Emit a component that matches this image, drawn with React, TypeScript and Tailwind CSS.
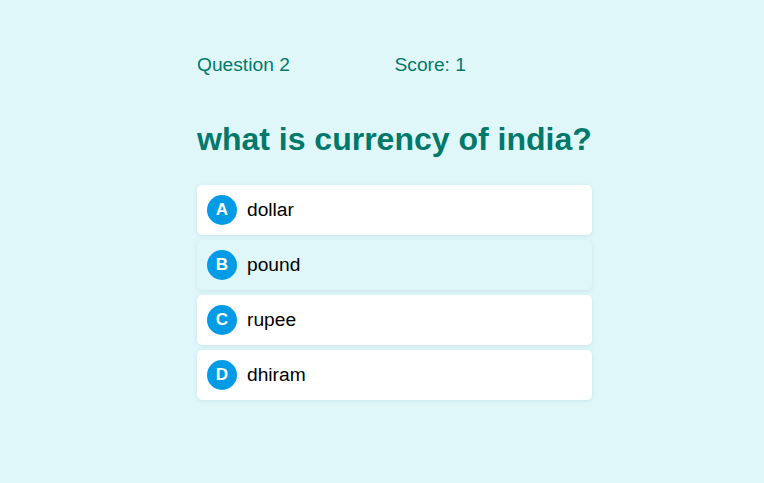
import React from "react";

const options = [
  { l: "A", t: "dollar" },
  { l: "B", t: "pound", hover: true },
  { l: "C", t: "rupee" },
  { l: "D", t: "dhiram" },
];

export default function App() {
  return (
    <div className="min-h-[483px] w-full bg-[#e0f7fa] font-['Liberation_Sans',Arial,sans-serif]">
      <div className="ml-[197px] w-[395px] pt-[53px]">
        <div className="grid grid-cols-2 text-[19.2px] leading-[23px] text-[#00796b]">
          <div>Question 2</div>
          <div>Score: 1</div>
        </div>
        <h1 className="mt-[45px] text-[32px] font-bold leading-[37px] text-[#00796b] whitespace-nowrap">
          what is currency of india?
        </h1>
        <div className="mt-[27px] flex flex-col gap-[5px]">
          {options.map((o) => (
            <div
              key={o.l}
              className={`flex h-[50px] items-center gap-[10px] rounded-[5px] px-[10px] shadow-[0_1px_4px_rgba(0,96,100,0.12)] ${
                o.hover ? "bg-[#e0f7fa]" : "bg-white"
              }`}
            >
              <div className="flex h-[30px] w-[30px] items-center justify-center rounded-full bg-[#039be5] text-[17px] font-bold text-white">
                {o.l}
              </div>
              <div className="text-[19.2px] text-[#000]">{o.t}</div>
            </div>
          ))}
        </div>
      </div>
    </div>
  );
}
